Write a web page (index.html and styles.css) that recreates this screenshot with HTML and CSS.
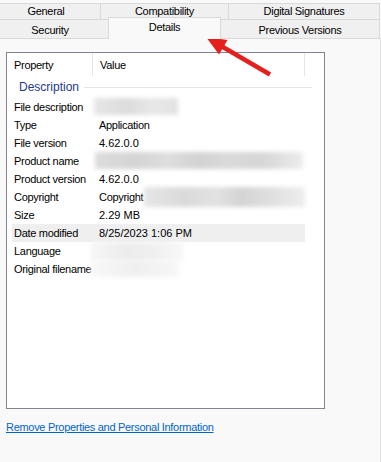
FILE: index.html
```html
<!DOCTYPE html>
<html lang="en">
<head>
  <meta charset="UTF-8">
  <title>Properties - Details</title>
  <link rel="stylesheet" href="styles.css">
</head>
<body>

<!-- Tab strip -->
<div class="tab-row row-top">
  <div class="tab tab-general">General</div>
  <div class="tab tab-compat">Compatibility</div>
  <div class="tab tab-sigs">Digital Signatures</div>
</div>
<div class="tab-row row-bottom">
  <div class="tab tab-security">Security</div>
  <div class="tab tab-details selected">Details</div>
  <div class="tab tab-versions">Previous Versions</div>
</div>

<!-- Page -->
<div class="panel">
  <div class="prop-list">
    <div class="list-header">
      <div class="col-head col-prop">Property</div>
      <div class="col-head col-value">Value</div>
      <div class="col-head col-rest"></div>
    </div>

    <div class="group-row">
      <span class="group-title">Description</span>
      <span class="group-line"></span>
    </div>

    <div class="prop-row"><span>File description</span><span class="blur blur-desc"></span></div>
    <div class="prop-row"><span>Type</span><span>Application</span></div>
    <div class="prop-row"><span>File version</span><span class="num">4.62.0.0</span></div>
    <div class="prop-row"><span>Product name</span><span class="blur blur-name"></span></div>
    <div class="prop-row"><span>Product version</span><span class="num">4.62.0.0</span></div>
    <div class="prop-row"><span>Copyright</span><span class="value-flex">Copyright<span class="blur blur-copy"></span></span></div>
    <div class="prop-row"><span>Size</span><span class="num">2.29 MB</span></div>
    <div class="prop-row hover"><span>Date modified</span><span class="num">8/25/2023 1:06 PM</span></div>
    <div class="prop-row"><span>Language</span><span class="blur blur-lang"></span></div>
    <div class="prop-row"><span>Original filename</span><span class="blur blur-orig"></span></div>
  </div>

  <a class="remove-link" href="#">Remove Properties and Personal Information</a>
</div>

<!-- Annotation arrow -->
<svg class="callout" width="90" height="60" viewBox="200 30 90 60">
  <line x1="222" y1="46.5" x2="270" y2="74.5" stroke="#e5201c" stroke-width="4.5"/>
  <polygon points="206,37 227.5,40 219,54.5" fill="#e5201c"/>
</svg>

</body>
</html>
```

FILE: styles.css
```css
/* Properties dialog - Details page */
body {
  margin: 0;
  width: 381px;
  height: 462px;
  overflow: hidden;
  background-color: #f9f9f9;
  font-family: "Liberation Sans", Arial, sans-serif;
  font-size: 11px;
  letter-spacing: -0.3px;
  color: #000;
  position: relative;
}

/* Tabs */
.tab-row {
  display: flex;
}
.row-top {
  margin-top: 3px;
  height: 16px;
}
.row-bottom {
  height: 19px;
}
.tab {
  box-sizing: border-box;
  background-color: #f0f0f0;
  border-top: 1px solid #d9d9d9;
  border-right: 1px solid #d9d9d9;
  text-align: center;
  white-space: nowrap;
}
.row-top .tab {
  line-height: 15px;
}
.row-bottom .tab {
  line-height: 20px;
}
.tab-general { margin-left: -8px; width: 109px; }
.tab-compat { width: 128px; }
.tab-sigs { width: 151px; }
.tab-security { margin-left: -8px; width: 116px; border-right: none; }
.tab-details { width: 113px; }
.tab-versions { width: 159px; }
.tab.selected {
  position: relative;
  z-index: 1;
  margin-top: -2px;
  height: 22px;
  line-height: 19px;
  background-color: #f9f9f9;
  border-left: 1px solid #d9d9d9;
}

/* Panel */
.panel {
  box-sizing: border-box;
  height: 424px;
  width: 381px;
  border-top: 1px solid #d9d9d9;
  border-right: 1px solid #e3e3e3;
  padding: 13px 0 0 6px;
}

/* Property list */
.prop-list {
  box-sizing: border-box;
  width: 319px;
  height: 357px;
  background-color: #fff;
  border: 1px solid #82858d;
}
.list-header {
  display: flex;
  height: 23px;
}
.col-head {
  box-sizing: border-box;
  line-height: 24px;
  padding-left: 7px;
  border-right: 1px solid #e5e5e5;
}
.col-prop { width: 86px; }
.col-value { width: 212px; }
.col-rest { border-right: none; }

.group-row {
  display: flex;
  align-items: center;
  height: 22px;
  padding-left: 12px;
}
.group-title {
  color: #1e3a8a;
  font-size: 12px;
  letter-spacing: 0;
}
.group-line {
  width: 228px;
  height: 1px;
  margin-left: 5px;
  background-color: #e5e5e5;
}

.prop-row {
  display: grid;
  grid-template-columns: 87px 1fr;
  height: 18px;
  line-height: 18px;
  width: 293px;
  margin-left: 5px;
}
.prop-row > span:first-child {
  padding-left: 2px;
  white-space: nowrap;
}
.prop-row .num {
  letter-spacing: 0;
}
.prop-row.hover {
  background-color: #efefef;
}
.value-flex {
  display: flex;
}

/* Redacted values */
.blur {
  display: block;
  height: 17px;
  filter: blur(2px);
}
.blur-desc {
  width: 84px;
  margin-left: -5px;
  background: linear-gradient(90deg, #e6e6e6, #dcdcdc 40%, #e8e8e8 70%, #e2e2e2);
}
.blur-name {
  width: 208px;
  margin-left: -4px;
  background: linear-gradient(90deg, #dcdcdc, #d4d4d4 20%, #dedede 35%, #d2d2d2 50%, #dadada 65%, #d6d6d6 80%, #ececec);
}
.blur-copy {
  flex: 1;
  height: 20px;
  margin-top: -1px;
  margin-left: 1px;
  background: linear-gradient(90deg, #e6e6e6, #dadada 25%, #e2e2e2 45%, #d4d4d4 60%, #e0e0e0 80%, #eeeeee);
}
.blur-lang {
  width: 92px;
  margin-left: -8px;
  height: 19px;
  background: linear-gradient(90deg, #f6f6f6, #ececec 40%, #f0f0f0 70%, #f8f8f8);
}
.blur-orig {
  width: 88px;
  margin-left: -8px;
  background: linear-gradient(90deg, #f8f8f8, #efefef 50%, #f7f7f7);
}

/* Link */
.remove-link {
  display: inline-block;
  margin-top: 12px;
  color: #0066cc;
  text-decoration: underline;
}

/* Annotation */
.callout {
  position: absolute;
  left: 200px;
  top: 30px;
}
```
